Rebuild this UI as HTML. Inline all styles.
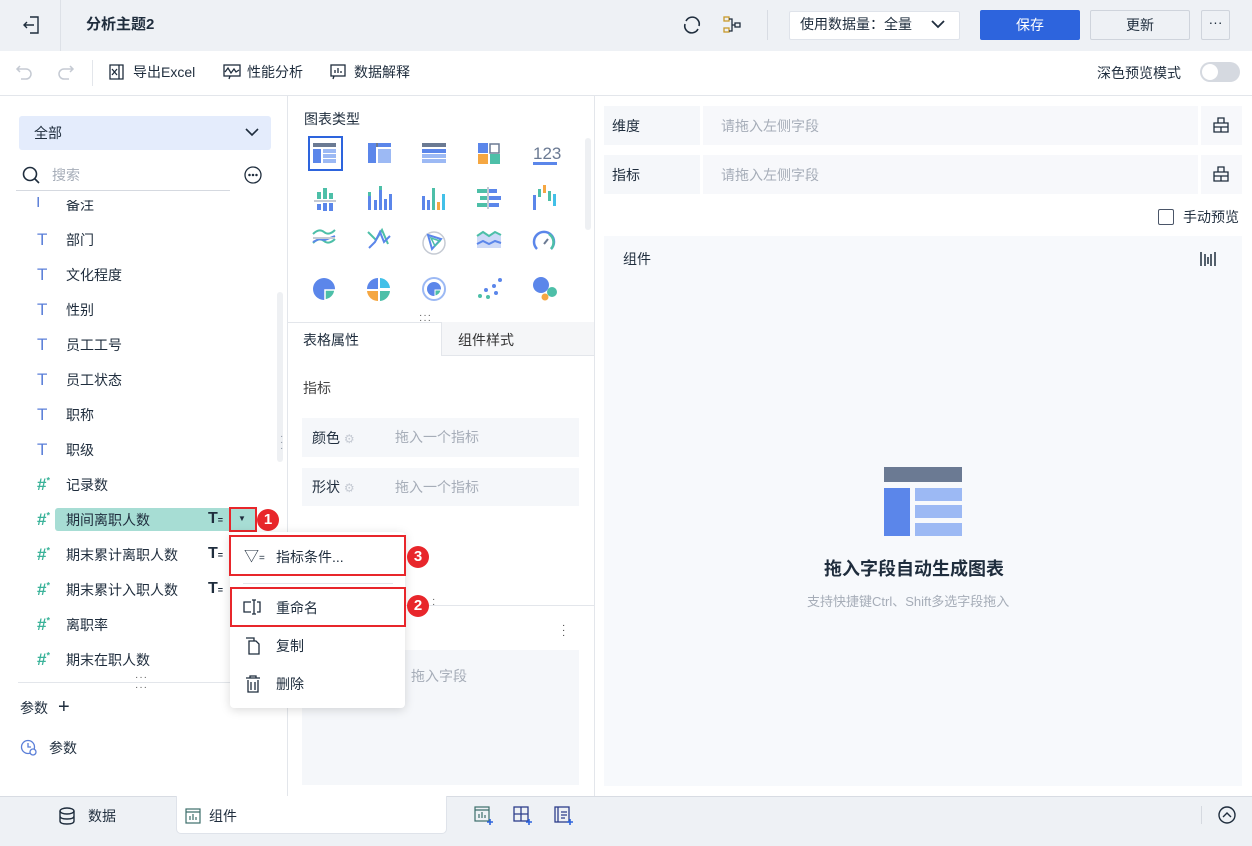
<!DOCTYPE html>
<html><head><meta charset="utf-8">
<style>
*{box-sizing:border-box;margin:0;padding:0}
body{width:1252px;height:846px;overflow:hidden;position:relative;background:#fff;font-family:"Liberation Sans","Noto Sans CJK SC",sans-serif;color:#1f2d3d;font-size:14px}
.a{position:absolute}
.t{position:absolute;white-space:nowrap;line-height:1}
svg{position:absolute;overflow:visible}
.gray{color:#a6adb8}
.badge{position:absolute;width:22px;height:22px;border-radius:50%;background:#e8262b;color:#fff;font-size:15px;font-weight:bold;text-align:center;line-height:22px}
.redbox{position:absolute;border:2px solid #e8262b}
</style></head><body>

<!-- top bar -->
<div class="a" style="left:0;top:0;width:1252px;height:51px;background:#eef1f5"></div>
<div class="a" style="left:60px;top:0;width:1px;height:51px;background:#dde1e7"></div>
<svg style="left:22px;top:15px" width="20" height="20" viewBox="0 0 20 20" fill="none" stroke="#1f2d3d" stroke-width="1.4"><path d="M8 2h8v16H8"/><path d="M12 10H2M5 7l-3 3 3 3"/></svg>
<div class="t" style="left:86px;top:17px;font-size:15px;font-weight:bold">分析主题2</div>
<svg style="left:682px;top:15px" width="20" height="20" viewBox="0 0 20 20" fill="none" stroke="#1f2d3d" stroke-width="1.6"><path d="M4 6a7 7 0 0 1 11-2M16 14a7 7 0 0 1-11 2"/><path d="M3 9a7 7 0 0 0 2 7M17 11a7 7 0 0 0-2-7"/></svg>
<svg style="left:722px;top:15px" width="20" height="20" viewBox="0 0 20 20" fill="none" stroke="#1f2d3d" stroke-width="1.3"><rect x="2" y="2" width="5" height="4" stroke="#c89a2a"/><rect x="2" y="13" width="5" height="4" stroke="#c89a2a"/><rect x="13" y="8" width="5" height="4"/><path d="M7 4h3v12H7M10 10h3"/></svg>
<div class="a" style="left:767px;top:10px;width:1px;height:30px;background:#d8dce3"></div>
<div class="a" style="left:789px;top:11px;width:171px;height:29px;background:#fff;border:1px solid #dfe3ea;border-radius:2px"></div>
<div class="t" style="left:800px;top:17px;font-size:14px">使用数据量：全量</div>
<svg style="left:931px;top:19px" width="14" height="10" viewBox="0 0 14 10" fill="none" stroke="#1f2d3d" stroke-width="1.8"><path d="M1 2l6 6 6-6"/></svg>
<div class="a" style="left:980px;top:10px;width:100px;height:30px;background:#2d64dd;border-radius:2px;color:#fff;text-align:center;line-height:30px;font-size:14px">保存</div>
<div class="a" style="left:1090px;top:10px;width:100px;height:30px;background:#eef1f5;border:1px solid #cfd4dc;border-radius:2px;text-align:center;line-height:28px;font-size:14px">更新</div>
<div class="a" style="left:1201px;top:10px;width:29px;height:30px;border:1px solid #cfd4dc;border-radius:2px;text-align:center;line-height:22px;font-size:14px">···</div>

<!-- toolbar -->
<div class="a" style="left:0;top:95px;width:1252px;height:1px;background:#e3e6eb"></div>
<svg style="left:16px;top:63px" width="18" height="18" viewBox="0 0 18 18" fill="none" stroke="#c5cad3" stroke-width="1.5"><path d="M4 3L1 6l3 3M1 6h9a5 5 0 0 1 0 10H5"/></svg>
<svg style="left:56px;top:63px" width="18" height="18" viewBox="0 0 18 18" fill="none" stroke="#c5cad3" stroke-width="1.5"><path d="M14 3l3 3-3 3M17 6H8a5 5 0 0 0 0 10h5"/></svg>
<div class="a" style="left:92px;top:60px;width:1px;height:26px;background:#e3e6eb"></div>
<svg style="left:109px;top:64px" width="16" height="16" viewBox="0 0 16 16" fill="none" stroke="#1f2d3d" stroke-width="1.3"><path d="M1 1h9v14H1zM10 1h4v14h-4"/><path d="M3 5l5 6M8 5l-5 6"/></svg>
<div class="t" style="left:133px;top:65px">导出Excel</div>
<svg style="left:223px;top:64px" width="18" height="16" viewBox="0 0 18 16" fill="none" stroke="#1f2d3d" stroke-width="1.3"><rect x="1" y="1" width="16" height="11"/><path d="M2 8l3-4 3 5 3-4 2 3 3-2M7 12l-1 3"/></svg>
<div class="t" style="left:247px;top:65px">性能分析</div>
<svg style="left:330px;top:64px" width="16" height="16" viewBox="0 0 16 16" fill="none" stroke="#1f2d3d" stroke-width="1.3"><rect x="1" y="1" width="14" height="11"/><path d="M5 9V6M8 9V4M11 9V7M4 12l-1 3"/></svg>
<div class="t" style="left:354px;top:65px">数据解释</div>
<div class="t" style="left:1097px;top:66px;font-size:14px">深色预览模式</div>
<div class="a" style="left:1200px;top:62px;width:40px;height:20px;border-radius:10px;background:#d5d9e0"></div>
<div class="a" style="left:1202px;top:64px;width:16px;height:16px;border-radius:50%;background:#fff"></div>

<!-- panel dividers -->
<div class="a" style="left:287px;top:96px;width:1px;height:700px;background:#e3e6eb"></div>
<div class="a" style="left:594px;top:96px;width:1px;height:700px;background:#e3e6eb"></div>

<!-- left panel -->
<div class="a" style="left:19px;top:116px;width:252px;height:34px;background:#e4ecfc;border-radius:3px"></div>
<div class="t" style="left:34px;top:126px">全部</div>
<svg style="left:245px;top:128px" width="14" height="9" viewBox="0 0 14 9" fill="none" stroke="#1f2d3d" stroke-width="1.6"><path d="M1 1l6 6 6-6"/></svg>
<svg style="left:22px;top:166px" width="18" height="18" viewBox="0 0 18 18" fill="none" stroke="#1f2d3d" stroke-width="1.6"><circle cx="8" cy="8" r="6.5"/><path d="M13 13l4 4"/></svg>
<div class="t gray" style="left:52px;top:168px">搜索</div>
<div class="a" style="left:16px;top:190px;width:214px;height:1px;background:#d5d9e0"></div>
<svg style="left:244px;top:166px" width="18" height="18" viewBox="0 0 18 18" fill="none" stroke="#1f2d3d" stroke-width="1.3"><circle cx="9" cy="9" r="8"/><circle cx="5.5" cy="9" r=".6" fill="#1f2d3d"/><circle cx="9" cy="9" r=".6" fill="#1f2d3d"/><circle cx="12.5" cy="9" r=".6" fill="#1f2d3d"/></svg>
<div class="a" style="left:277px;top:292px;width:6px;height:170px;background:#eef0f3;border-radius:3px"></div>
<div class="t" style="left:280px;top:434px;color:#8a93a1;font-size:10px;line-height:6px">·<br>·<br>·</div>

<div class="t" style="left:36px;top:195px;color:#5b7fd8;font-size:16px;clip-path:inset(2px 0 0 0)">I</div>
<div class="t" style="left:66px;top:198px;clip-path:inset(2px 0 0 0)">备注</div>
<div class="t" style="left:37px;top:231px;color:#5b7fd8;font-size:17px">T</div><div class="t" style="left:66px;top:233px">部门</div>
<div class="t" style="left:37px;top:266px;color:#5b7fd8;font-size:17px">T</div><div class="t" style="left:66px;top:268px">文化程度</div>
<div class="t" style="left:37px;top:301px;color:#5b7fd8;font-size:17px">T</div><div class="t" style="left:66px;top:303px">性别</div>
<div class="t" style="left:37px;top:336px;color:#5b7fd8;font-size:17px">T</div><div class="t" style="left:66px;top:338px">员工工号</div>
<div class="t" style="left:37px;top:371px;color:#5b7fd8;font-size:17px">T</div><div class="t" style="left:66px;top:373px">员工状态</div>
<div class="t" style="left:37px;top:406px;color:#5b7fd8;font-size:17px">T</div><div class="t" style="left:66px;top:408px">职称</div>
<div class="t" style="left:37px;top:441px;color:#5b7fd8;font-size:17px">T</div><div class="t" style="left:66px;top:443px">职级</div>
<div class="t" style="left:37px;top:476px;color:#3bb39a;font-size:17px;font-weight:bold">#<sup style="font-size:9px">*</sup></div><div class="t" style="left:66px;top:478px">记录数</div>
<div class="a" style="left:55px;top:508px;width:174px;height:23px;background:#a7ddd4;border-radius:3px 0 0 3px"></div>
<div class="t" style="left:37px;top:511px;color:#3bb39a;font-size:17px;font-weight:bold">#<sup style="font-size:9px">*</sup></div><div class="t" style="left:66px;top:513px">期间离职人数</div>
<div class="t" style="left:208px;top:511px;font-size:16px;font-weight:bold">T<span style="font-size:9px">=</span></div>
<div class="a" style="left:230px;top:508px;width:26px;height:23px;background:#a7ddd4"></div>
<div class="t" style="left:238px;top:515px;font-size:8px">▼</div>
<div class="redbox" style="left:229px;top:507px;width:28px;height:25px"></div>
<div class="badge" style="left:257px;top:509px">1</div>
<div class="t" style="left:37px;top:546px;color:#3bb39a;font-size:17px;font-weight:bold">#<sup style="font-size:9px">*</sup></div><div class="t" style="left:66px;top:548px">期末累计离职人数</div>
<div class="t" style="left:208px;top:546px;font-size:16px;font-weight:bold">T<span style="font-size:9px">=</span></div>
<div class="t" style="left:37px;top:581px;color:#3bb39a;font-size:17px;font-weight:bold">#<sup style="font-size:9px">*</sup></div><div class="t" style="left:66px;top:583px">期末累计入职人数</div>
<div class="t" style="left:208px;top:581px;font-size:16px;font-weight:bold">T<span style="font-size:9px">=</span></div>
<div class="t" style="left:37px;top:616px;color:#3bb39a;font-size:17px;font-weight:bold">#<sup style="font-size:9px">*</sup></div><div class="t" style="left:66px;top:618px">离职率</div>
<div class="t" style="left:37px;top:651px;color:#3bb39a;font-size:17px;font-weight:bold">#<sup style="font-size:9px">*</sup></div><div class="t" style="left:66px;top:653px">期末在职人数</div>
<div class="a" style="left:18px;top:682px;width:268px;height:1px;background:#e3e6eb"></div>
<div class="t" style="left:135px;top:673px;font-size:10px;color:#555;letter-spacing:1px">···<br>···</div>
<div class="t" style="left:20px;top:701px">参数</div>
<div class="t" style="left:58px;top:697px;font-size:20px;font-weight:300">+</div>
<svg style="left:20px;top:739px" width="18" height="18" viewBox="0 0 18 18" fill="none" stroke="#5b7fd8" stroke-width="1.3"><circle cx="8" cy="8" r="6.5"/><path d="M8 4v4h3"/><circle cx="13" cy="13" r="3" fill="#fff"/></svg>
<div class="t" style="left:49px;top:741px">参数</div>

<!-- middle panel -->
<div class="t" style="left:304px;top:112px;font-size:14px">图表类型</div>
<div class="a" style="left:308px;top:136px;width:35px;height:35px;border:2px solid #2d64dd"></div>
<svg style="left:290px;top:130px" width="290" height="180">
 <rect x="23" y="13" width="23" height="4" fill="#6b7a93"/><rect x="23" y="19" width="8" height="14" fill="#5b86ea"/><rect x="33" y="19" width="13" height="4" fill="#9cb9f4"/><rect x="33" y="24" width="13" height="4" fill="#9cb9f4"/><rect x="33" y="29" width="13" height="4" fill="#9cb9f4"/>
 <rect x="78" y="13" width="23" height="4" fill="#6b7a93"/><rect x="78" y="13" width="8" height="20" fill="#5b86ea"/><rect x="88" y="19" width="13" height="14" fill="#9cb9f4"/><rect x="88" y="13" width="13" height="4" fill="#5b86ea"/>
 <rect x="132" y="13" width="24" height="4" fill="#6b7a93"/><rect x="132" y="19" width="24" height="4" fill="#5b86ea"/><rect x="132" y="24" width="24" height="4" fill="#9cb9f4"/><rect x="132" y="29" width="24" height="4" fill="#9cb9f4"/>
 <rect x="188" y="13" width="10" height="10" fill="#5b86ea"/><rect x="200" y="14" width="9" height="9" fill="none" stroke="#6b7a93" stroke-width="1.5"/><rect x="188" y="24" width="10" height="10" fill="#f5a742"/><rect x="200" y="24" width="10" height="10" fill="#4dbfa8"/>
 <text x="243" y="29" font-family="Liberation Sans" font-size="17" fill="#6b7a93">123</text><rect x="243" y="32" width="24" height="3" fill="#5b86ea"/>
 <g transform="translate(0,12)">
 <g fill="#5b86ea"><rect x="27" y="50" width="4" height="7" fill="#4dbfa8"/><rect x="33" y="46" width="4" height="11" fill="#4dbfa8"/><rect x="39" y="51" width="4" height="6" fill="#4dbfa8"/><rect x="24" y="58" width="22" height="2" fill="#c5cad3"/><rect x="27" y="62" width="4" height="6"/><rect x="33" y="61" width="4" height="8"/><rect x="39" y="61" width="4" height="8"/></g>
 <g fill="#5b86ea"><rect x="78" y="54" width="3" height="14"/><rect x="78" y="50" width="3" height="4" fill="#4dbfa8"/><rect x="84" y="58" width="3" height="10"/><rect x="89" y="48" width="3" height="20"/><rect x="89" y="44" width="3" height="4" fill="#4dbfa8"/><rect x="94" y="57" width="3" height="11"/><rect x="99" y="52" width="3" height="16"/></g>
 <g><rect x="132" y="54" width="3" height="14" fill="#5b86ea"/><rect x="137" y="58" width="3" height="10" fill="#5b86ea"/><rect x="142" y="46" width="3" height="22" fill="#4dbfa8"/><rect x="147" y="60" width="3" height="8" fill="#f5a742"/><rect x="152" y="52" width="3" height="16" fill="#42c0e8"/></g>
 <g><rect x="187" y="47" width="10" height="4" fill="#4dbfa8"/><rect x="199" y="47" width="8" height="4" fill="#5b86ea"/><rect x="190" y="54" width="7" height="4" fill="#4dbfa8"/><rect x="199" y="54" width="12" height="4" fill="#5b86ea"/><rect x="187" y="61" width="10" height="4" fill="#4dbfa8"/><rect x="199" y="61" width="10" height="4" fill="#5b86ea"/><rect x="197" y="45" width="2" height="22" fill="#c5cad3"/></g>
 <g><rect x="243" y="53" width="3" height="15" fill="#5b86ea"/><rect x="248" y="47" width="3" height="8" fill="#4dbfa8"/><rect x="253" y="43" width="3" height="8" fill="#f5a742"/><rect x="258" y="49" width="3" height="10" fill="#4dbfa8"/><rect x="263" y="52" width="3" height="12" fill="#42c0e8"/></g>
 </g>
 <path d="M23 104q6-6 11-2t11-2M23 113q6-6 11-2t11-2" fill="none" stroke="#4dbfa8" stroke-width="2"/><path d="M23 112l6-3 6 1 10-4" stroke="#5b86ea" stroke-width="2" fill="none"/><rect x="23" y="107" width="22" height="2" fill="#c5cad3"/>
 <path d="M78 102l8 8 6-10 6 14" fill="none" stroke="#4dbfa8" stroke-width="2"/><path d="M79 118l6-6 5-10 4 10 6-6" fill="none" stroke="#5b86ea" stroke-width="2"/>
 <circle cx="144" cy="113" r="11" fill="none" stroke="#c5cad3" stroke-width="1.5"/><path d="M138 105l13 4-9 10z" fill="none" stroke="#5b86ea" stroke-width="2"/><path d="M141 108l9 3-5 5z" fill="none" stroke="#4dbfa8" stroke-width="1.5"/>
 <path d="M187 107l6-4 6 4 6-4 6 3v12h-24z" fill="#cdd9f7"/><path d="M187 106l6-4 6 4 6-4 6 3" fill="none" stroke="#4dbfa8" stroke-width="2"/><path d="M187 114l6-3 6 3 6-3 6 2" fill="none" stroke="#5b86ea" stroke-width="2"/>
 <path d="M247 119a10 10 0 1 1 14 0" fill="none" stroke="#5b86ea" stroke-width="2.5"/><path d="M259 104a10 10 0 0 1 2 15" fill="none" stroke="#4dbfa8" stroke-width="2.5"/><path d="M254 114l4-5" stroke="#6b7a93" stroke-width="2"/>
 <circle cx="34" cy="159" r="11" fill="#5b86ea"/><path d="M35 160h10a11 11 0 0 1-10 10z" fill="#4dbfa8" stroke="#fff" stroke-width="1.5"/>
 <path d="M88 148a11 11 0 0 0-11 11h11z" fill="#5b86ea"/><path d="M90 148a11 11 0 0 1 10 10h-10z" fill="#42c0e8"/><path d="M77 161h11v10a11 11 0 0 1-11-10z" fill="#f5a742"/><path d="M90 161h10a11 11 0 0 1-10 10z" fill="#4dbfa8"/>
 <circle cx="144" cy="159" r="11" fill="none" stroke="#9cb9f4" stroke-width="2"/><circle cx="144" cy="159" r="7" fill="#5b86ea"/><path d="M145 160h6a7 7 0 0 1-6 6z" fill="#4dbfa8" stroke="#fff"/>
 <g fill="#5b86ea"><circle cx="190" cy="166" r="2" fill="#4dbfa8"/><circle cx="196" cy="160" r="2"/><circle cx="198" cy="167" r="2" fill="#4dbfa8"/><circle cx="204" cy="156" r="2"/><circle cx="206" cy="163" r="2"/><circle cx="210" cy="150" r="2"/></g>
 <circle cx="251" cy="155" r="8" fill="#5b86ea"/><circle cx="262" cy="162" r="5" fill="#4dbfa8"/><circle cx="255" cy="167" r="3.5" fill="#f5a742"/>
</svg>
<div class="a" style="left:585px;top:138px;width:6px;height:92px;background:#eef0f3;border-radius:3px"></div>
<div class="t" style="left:419px;top:313px;font-size:10px;color:#555;letter-spacing:1px;line-height:5px">···<br>···</div>
<div class="a" style="left:288px;top:322px;width:306px;height:1px;background:#e3e6eb"></div>
<div class="a" style="left:441px;top:322px;width:153px;height:34px;background:#f5f6f8;border-left:1px solid #e3e6eb;border-bottom:1px solid #e3e6eb"></div>
<div class="t" style="left:303px;top:333px">表格属性</div>
<div class="t" style="left:458px;top:333px;color:#333">组件样式</div>
<div class="t" style="left:303px;top:381px;color:#444">指标</div>
<div class="a" style="left:302px;top:418px;width:277px;height:39px;background:#f5f7fa"></div>
<div class="t" style="left:312px;top:431px">颜色 <span style="color:#c5cad3;font-size:12px">⚙</span></div>
<div class="t gray" style="left:395px;top:430px">拖入一个指标</div>
<div class="a" style="left:302px;top:468px;width:277px;height:38px;background:#f5f7fa"></div>
<div class="t" style="left:312px;top:480px">形状 <span style="color:#c5cad3;font-size:12px">⚙</span></div>
<div class="t gray" style="left:395px;top:480px">拖入一个指标</div>
<div class="a" style="left:288px;top:605px;width:306px;height:1px;background:#e3e6eb"></div>
<div class="t" style="left:432px;top:597px;font-size:10px;color:#555;line-height:5px">·<br>·</div>
<div class="t" style="left:562px;top:623px;font-size:10px;line-height:5px;color:#333">·<br>·<br>·</div>
<div class="a" style="left:302px;top:650px;width:277px;height:135px;background:#f5f7fa"></div>
<div class="t gray" style="left:411px;top:669px">拖入字段</div>

<!-- right panel -->
<div class="a" style="left:604px;top:106px;width:96px;height:39px;background:#f5f7fa"></div>
<div class="a" style="left:703px;top:106px;width:495px;height:39px;background:#f7f8fb"></div>
<div class="a" style="left:1201px;top:106px;width:41px;height:39px;background:#f7f8fb"></div>
<div class="t" style="left:612px;top:119px">维度</div>
<div class="t gray" style="left:721px;top:119px">请拖入左侧字段</div>
<svg style="left:1213px;top:117px" width="16" height="16" viewBox="0 0 16 16" fill="none" stroke="#1f2d3d" stroke-width="1.3"><path d="M5 1h6v5H5zM1 6h14v9H1zM8 10v5M1 10h14"/></svg>
<div class="a" style="left:604px;top:155px;width:96px;height:39px;background:#f5f7fa"></div>
<div class="a" style="left:703px;top:155px;width:495px;height:39px;background:#f7f8fb"></div>
<div class="a" style="left:1201px;top:155px;width:41px;height:39px;background:#f7f8fb"></div>
<div class="t" style="left:612px;top:168px">指标</div>
<div class="t gray" style="left:721px;top:168px">请拖入左侧字段</div>
<svg style="left:1213px;top:166px" width="16" height="16" viewBox="0 0 16 16" fill="none" stroke="#1f2d3d" stroke-width="1.3"><path d="M5 1h6v5H5zM1 6h14v9H1zM8 10v5M1 10h14"/></svg>
<div class="a" style="left:1158px;top:209px;width:16px;height:16px;border:1px solid #4a5568;border-radius:2px"></div>
<div class="t" style="left:1183px;top:210px">手动预览</div>
<div class="a" style="left:604px;top:236px;width:638px;height:550px;background:#f7f9fc"></div>
<div class="t" style="left:623px;top:252px">组件</div>
<svg style="left:1200px;top:250px" width="16" height="18" viewBox="0 0 16 18" stroke="#1f2d3d" stroke-width="1.5"><path d="M1 2v14M15 2v14M5 4v12M11 4v12M8 7v7"/></svg>
<div class="a" style="left:884px;top:467px;width:78px;height:15px;background:#6b7a93"></div>
<div class="a" style="left:884px;top:488px;width:26px;height:48px;background:#5b86ea"></div>
<div class="a" style="left:915px;top:488px;width:47px;height:13px;background:#9cb9f4"></div>
<div class="a" style="left:915px;top:505px;width:47px;height:13px;background:#9cb9f4"></div>
<div class="a" style="left:915px;top:523px;width:47px;height:13px;background:#9cb9f4"></div>
<div class="t" style="left:824px;top:560px;font-size:18px;font-weight:bold;color:#1f2d3d">拖入字段自动生成图表</div>
<div class="t" style="left:807px;top:595px;font-size:13px;color:#a6adb8">支持快捷键Ctrl、Shift多选字段拖入</div>

<!-- bottom bar -->
<div class="a" style="left:0;top:796px;width:1252px;height:50px;background:#eef1f5;border-top:1px solid #d8dce3"></div>
<div class="a" style="left:176px;top:796px;width:271px;height:38px;background:#fff;border:1px solid #dfe3ea;border-top:none;border-radius:0 0 5px 5px"></div>
<svg style="left:59px;top:807px" width="16" height="18" viewBox="0 0 16 18" fill="none" stroke="#1f2d3d" stroke-width="1.4"><ellipse cx="8" cy="4" rx="7" ry="3"/><path d="M1 4v10c0 2 3 3 7 3s7-1 7-3V4M1 9c0 2 3 3 7 3s7-1 7-3"/></svg>
<div class="t" style="left:88px;top:809px">数据</div>
<svg style="left:185px;top:808px" width="16" height="16" viewBox="0 0 16 16" fill="none" stroke="#3c6e6a" stroke-width="1.2"><rect x="1" y="1" width="14" height="14"/><path d="M1 4h14M5 12V8M8 12V6M11 12V9"/></svg>
<div class="t" style="left:209px;top:809px">组件</div>
<svg style="left:474px;top:806px" width="20" height="20" viewBox="0 0 20 20" fill="none" stroke="#3c6e6a" stroke-width="1.2"><rect x="1" y="1" width="14" height="14"/><path d="M1 4h14M5 12V8M8 12V6M11 12V9"/><path d="M16 13v6M13 16h6" stroke="#2d64dd" stroke-width="1.6"/></svg>
<svg style="left:513px;top:806px" width="20" height="20" viewBox="0 0 20 20" fill="none" stroke="#2d3e8a" stroke-width="1.3"><rect x="1" y="1" width="14" height="14"/><path d="M1 8h14M8 1v14"/><path d="M16 13v6M13 16h6" stroke="#2d64dd" stroke-width="1.6"/></svg>
<svg style="left:554px;top:806px" width="20" height="20" viewBox="0 0 20 20" fill="none" stroke="#2d3e8a" stroke-width="1.3"><rect x="1" y="1" width="14" height="15"/><path d="M4 1v15M7 6h6M7 9h6M7 12h4"/><path d="M16 13v6M13 16h6" stroke="#2d64dd" stroke-width="1.6"/></svg>
<div class="a" style="left:1201px;top:806px;width:1px;height:18px;background:#d5d9e0"></div>
<svg style="left:1218px;top:806px" width="18" height="18" viewBox="0 0 18 18" fill="none" stroke="#1f2d3d" stroke-width="1.4"><circle cx="9" cy="9" r="8"/><path d="M5 11l4-4 4 4"/></svg>

<!-- context menu (on top) -->
<div class="a" style="left:230px;top:532px;width:175px;height:176px;background:#fff;border-radius:4px;box-shadow:0 2px 10px rgba(0,0,0,.15)"></div>
<div class="redbox" style="left:229px;top:535px;width:177px;height:41px"></div>
<div class="t" style="left:244px;top:549px;font-size:15px">▽<span style="font-size:10px">=</span></div>
<div class="t" style="left:276px;top:550px">指标条件...</div>
<div class="a" style="left:243px;top:583px;width:150px;height:1px;background:#e3e6eb"></div>
<div class="redbox" style="left:230px;top:587px;width:176px;height:40px"></div>
<svg style="left:243px;top:599px" width="20" height="16" viewBox="0 0 20 16" fill="none" stroke="#1f2d3d" stroke-width="1.3"><path d="M8 3H1v10h7M14 3h3v10h-3M11 1v14M9 1h4M9 15h4"/></svg>
<div class="t" style="left:276px;top:601px">重命名</div>
<svg style="left:245px;top:637px" width="16" height="18" viewBox="0 0 16 18" fill="none" stroke="#1f2d3d" stroke-width="1.3"><path d="M1 1h8v3M4 4h7l3 3v10H4z"/></svg>
<div class="t" style="left:276px;top:639px">复制</div>
<svg style="left:245px;top:675px" width="16" height="18" viewBox="0 0 16 18" fill="none" stroke="#1f2d3d" stroke-width="1.3"><path d="M1 3h14M5 3V1h6v2M3 5v12h10V5M6 7v8M10 7v8"/></svg>
<div class="t" style="left:276px;top:677px">删除</div>
<div class="badge" style="left:407px;top:546px">3</div>
<div class="badge" style="left:407px;top:595px">2</div>

</body></html>
